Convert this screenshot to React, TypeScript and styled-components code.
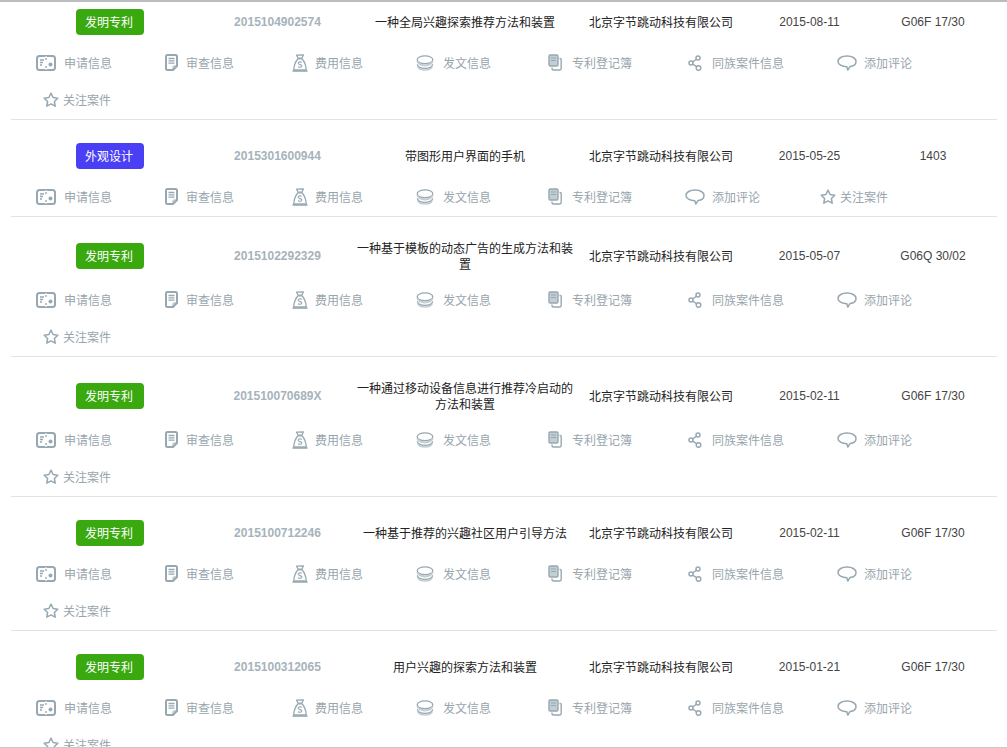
import React from "react";
import styled, { createGlobalStyle } from "styled-components";

const ICON_COLOR = "#97a8b2";
const ICON_TINT = "#c3ced4";

const GlobalStyle = createGlobalStyle`
	html, body {
		margin: 0;
		padding: 0;
		background: #ffffff;
	}
	body {
		font-family: "Liberation Sans", "Noto Sans CJK SC", sans-serif;
		font-size: 12px;
	}
`;

const ApplyIcon = () => (
	<svg width="20" height="16" viewBox="0 0 20 16" fill="none">
		<rect x="1" y="1" width="18" height="14" rx="2.5" stroke={ICON_COLOR} strokeWidth="2" />
		<path d="M4 5h4M4 7.500h3M4 10h2" stroke={ICON_COLOR} strokeWidth="1.300" />
		<circle cx="14.500" cy="9.500" r="2" fill={ICON_COLOR} />
		<path d="M10 1v2.500M10 12.500V15" stroke="#ffffff" strokeWidth="1" />
		<circle cx="10" cy="4" r="0.900" fill={ICON_COLOR} />
		<circle cx="10" cy="12" r="0.900" fill={ICON_COLOR} />
	</svg>
);

const ReviewIcon = () => (
	<svg width="13" height="17" viewBox="0 0 13 17" fill="none">
		<path d="M2.500 1h8A1.500 1.500 0 0 1 12 2.500V12l-4 4H2.500A1.500 1.500 0 0 1 1 14.500V2.500A1.500 1.500 0 0 1 2.500 1z" stroke={ICON_COLOR} strokeWidth="2" strokeLinejoin="round" />
		<path d="M8 16v-3a1 1 0 0 1 1-1h3" stroke={ICON_COLOR} strokeWidth="1" />
		<path d="M3.500 4.500h6M3.500 6.800h6M3.500 9.100h6" stroke={ICON_COLOR} strokeWidth="1.300" />
	</svg>
);

const FeeIcon = () => (
	<svg width="16" height="18" viewBox="0 0 16 18" fill="none">
		<path d="M4.500 1.200 11.500 0.800 9.800 4.200H6.200z" stroke={ICON_COLOR} strokeWidth="1.300" strokeLinejoin="round" />
		<path d="M6 4.800h4C12.500 7.500 14 12 14.300 16H1.700C2 12 3.500 7.500 6 4.800z" stroke={ICON_COLOR} strokeWidth="1.300" />
		<path d="M0.500 17h15" stroke={ICON_COLOR} strokeWidth="1.600" />
		<path d="M9.800 8.500C9 7.500 6.200 7.600 6.200 9.300c0 1.700 3.600 1 3.600 2.700 0 1.500-2.800 1.600-3.700.6" stroke={ICON_COLOR} strokeWidth="1.100" />
	</svg>
);

const PublishIcon = () => (
	<svg width="18" height="16" viewBox="0 0 18 16" fill="none">
		<ellipse cx="9" cy="4.800" rx="7.800" ry="3.900" stroke={ICON_COLOR} strokeWidth="1.300" />
		<path d="M1.300 6.200c.4 2.300 3.700 4.200 7.700 4.200s7.300-1.900 7.700-4.200" stroke={ICON_TINT} strokeWidth="2" />
		<path d="M1.300 9.400c.4 2.300 3.700 4 7.700 4s7.300-1.700 7.700-4" stroke={ICON_COLOR} strokeWidth="1.300" />
		<path d="M1.800 11.900c1 1.900 3.800 3.100 7.200 3.100s6.200-1.200 7.200-3.100" stroke={ICON_TINT} strokeWidth="1.500" />
	</svg>
);

const RegisterIcon = () => (
	<svg width="14" height="17" viewBox="0 0 14 17" fill="none">
		<rect x="1" y="1" width="9" height="11" rx="1.200" fill={ICON_TINT} stroke={ICON_COLOR} strokeWidth="1.400" />
		<path d="M3 4h5M3 6.500h5" stroke={ICON_COLOR} strokeWidth="1.200" />
		<path d="M11.500 4.500h.7a1 1 0 0 1 1 1v9a1.500 1.500 0 0 1-1.500 1.500H5.500A1.500 1.500 0 0 1 4 14.500V13.500" stroke={ICON_COLOR} strokeWidth="1.400" />
	</svg>
);

const ShareIcon = () => (
	<svg width="14" height="16" viewBox="0 0 14 16" fill="none">
		<circle cx="10" cy="3" r="2" stroke={ICON_COLOR} strokeWidth="1.500" />
		<circle cx="3" cy="8" r="2" stroke={ICON_COLOR} strokeWidth="1.500" />
		<circle cx="10.500" cy="13" r="2.300" stroke={ICON_COLOR} strokeWidth="1.500" />
		<path d="M8.400 4.200 4.700 6.900M4.700 9.100l3.900 2.500" stroke={ICON_COLOR} strokeWidth="1.300" />
	</svg>
);

const CommentIcon = () => (
	<svg width="20" height="16" viewBox="0 0 20 16" fill="none">
		<path d="M10 1c5 0 9 2.200 9 5.400 0 2.800-2.800 4.700-6 5.200L10.800 15l-1-3.300C5 11.700 1 9.500 1 6.400 1 3.200 5 1 10 1z" stroke={ICON_COLOR} strokeWidth="1.500" strokeLinejoin="round" />
	</svg>
);

const StarIcon = () => (
	<svg width="16" height="15" viewBox="0 0 16 15" fill="none">
		<path d="M8 1.200l2.100 4.300 4.700.7-3.400 3.300.8 4.700L8 11.900l-4.200 2.300.8-4.700L1.200 6.200l4.700-.7z" stroke={ICON_COLOR} strokeWidth="1.500" strokeLinejoin="round" />
	</svg>
);

type ActionKey = "apply" | "review" | "fee" | "publish" | "register" | "family" | "comment" | "star";

const ACTIONS: Record<ActionKey, { label: string; icon: React.ReactNode; boxWidth: number; inset: number }> = {
	apply: { label: "申请信息", icon: <ApplyIcon />, boxWidth: 28, inset: 0 },
	review: { label: "审查信息", icon: <ReviewIcon />, boxWidth: 21, inset: 0 },
	fee: { label: "费用信息", icon: <FeeIcon />, boxWidth: 28, inset: 5 },
	publish: { label: "发文信息", icon: <PublishIcon />, boxWidth: 27, inset: 0 },
	register: { label: "专利登记簿", icon: <RegisterIcon />, boxWidth: 28, inset: 4 },
	family: { label: "同族案件信息", icon: <ShareIcon />, boxWidth: 27, inset: 3 },
	comment: { label: "添加评论", icon: <CommentIcon />, boxWidth: 27, inset: 0 },
	star: { label: "关注案件", icon: <StarIcon />, boxWidth: 27, inset: 7 },
};

const FULL_ACTIONS: ActionKey[] = ["apply", "review", "fee", "publish", "register", "family", "comment", "star"];
const DESIGN_ACTIONS: ActionKey[] = ["apply", "review", "fee", "publish", "register", "comment", "star"];

const COMPANY = "北京字节跳动科技有限公司";

const PATENTS: {
	kind: "invention" | "design";
	number: string;
	title: string;
	date: string;
	ipc: string;
}[] = [
	{ kind: "invention", number: "2015104902574", title: "一种全局兴趣探索推荐方法和装置", date: "2015-08-11", ipc: "G06F 17/30" },
	{ kind: "design", number: "2015301600944", title: "带图形用户界面的手机", date: "2015-05-25", ipc: "1403" },
	{ kind: "invention", number: "2015102292329", title: "一种基于模板的动态广告的生成方法和装置", date: "2015-05-07", ipc: "G06Q 30/02" },
	{ kind: "invention", number: "201510070689X", title: "一种通过移动设备信息进行推荐冷启动的方法和装置", date: "2015-02-11", ipc: "G06F 17/30" },
	{ kind: "invention", number: "2015100712246", title: "一种基于推荐的兴趣社区用户引导方法", date: "2015-02-11", ipc: "G06F 17/30" },
	{ kind: "invention", number: "2015100312065", title: "用户兴趣的探索方法和装置", date: "2015-01-21", ipc: "G06F 17/30" },
];

export default function App() {
	return (
		<>
			<GlobalStyle />
			<Viewport>
				<List>
					{PATENTS.map((p) => {
						const actions = p.kind === "design" ? DESIGN_ACTIONS : FULL_ACTIONS;
						return (
							<Row key={p.number}>
								<InfoRow>
									<Cell>
										<Badge $kind={p.kind}>{p.kind === "design" ? "外观设计" : "发明专利"}</Badge>
									</Cell>
									<NumberCell>{p.number}</NumberCell>
									<TitleCell>{p.title}</TitleCell>
									<CjkCell>{COMPANY}</CjkCell>
									<DataCell>{p.date}</DataCell>
									<DataCell>{p.ipc}</DataCell>
								</InfoRow>
								<Actions>
									{actions.map((key) => (
										<Action key={key}>
											<IconBox $width={ACTIONS[key].boxWidth} $inset={ACTIONS[key].inset}>
												{ACTIONS[key].icon}
											</IconBox>
											{ACTIONS[key].label}
										</Action>
									))}
								</Actions>
							</Row>
						);
					})}
				</List>
			</Viewport>
		</>
	);
}

const Viewport = styled.div`
	box-sizing: border-box;
	height: 748px;
	overflow: hidden;
	border-top: 2px solid #bdbdbd;
	border-bottom: 1px solid #c8c8c8;
`;

const List = styled.div`
	margin: -16px 10px 0 11px;
`;

const Row = styled.div`
	border-bottom: 1px solid #dfe3e5;
`;

const InfoRow = styled.div`
	display: grid;
	grid-template-columns: 198px 137px 235px 160px 137px 110px;
	align-items: center;
	padding: 23px 0 9px;
`;

const Cell = styled.div`
	text-align: center;
	color: #222222;
	line-height: 16px;
`;

/* the CJK glyphs sit a pixel higher than in the reference */
const CjkCell = styled(Cell)`
	padding-top: 1px;
	margin-bottom: -1px;
`;

const NumberCell = styled(Cell)`
	color: #a6b3bb;
	font-weight: 700;
`;

const TitleCell = styled(CjkCell)`
	padding-left: 9px;
	padding-right: 6px;
`;

const DataCell = styled(Cell)`
	color: #444444;
`;

const Badge = styled.span<{ $kind: "invention" | "design" }>`
	display: inline-block;
	box-sizing: border-box;
	width: 68px;
	height: 26px;
	padding-right: 2px;
	line-height: 28px;
	border-radius: 4px;
	color: #ffffff;
	font-size: 12px;
	vertical-align: top;
	background: ${(props) => (props.$kind === "design" ? "#4b3ff5" : "#3aa80f")};
`;

const Actions = styled.div`
	display: flex;
	flex-wrap: wrap;
	column-gap: 53px;
	padding: 0 0 1px 25px;
`;

const Action = styled.div`
	display: flex;
	align-items: center;
	height: 37px;
	color: #98a5ad;
	font-size: 12px;
`;

const IconBox = styled.span<{ $width: number; $inset: number }>`
	display: flex;
	align-items: center;
	box-sizing: border-box;
	width: ${(props) => props.$width}px;
	padding-left: ${(props) => props.$inset}px;
`;
